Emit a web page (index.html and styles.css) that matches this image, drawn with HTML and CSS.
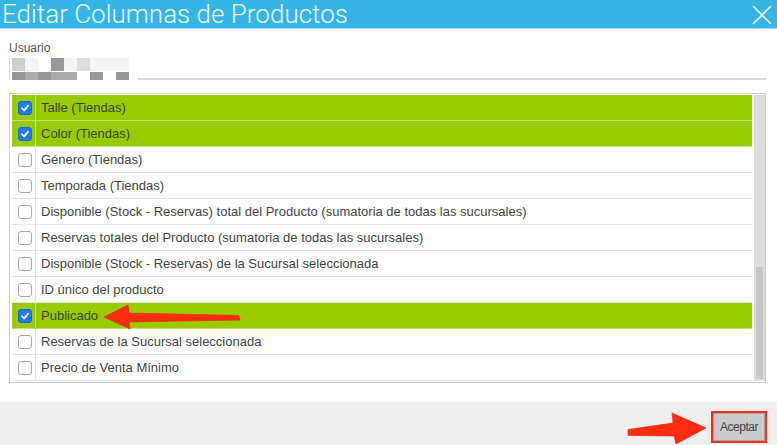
FILE: index.html
```html
<!DOCTYPE html>
<html lang="es">
<head>
<meta charset="utf-8">
<title>Editar Columnas de Productos</title>
<link rel="stylesheet" href="styles.css">
</head>
<body>
<div class="dialog">
  <header class="titlebar">
    <h1 class="title">Editar Columnas de Productos</h1>
    <button class="close" aria-label="Cerrar">
      <svg width="22" height="20" viewBox="0 0 22 20"><path d="M2 1 L20 19 M20 1 L2 19" stroke="#e6f5fc" stroke-width="1.6" fill="none"/></svg>
    </button>
  </header>

  <main class="content">
    <label class="field-label">Usuario</label>
    <div class="user-field">
      <div class="mosaic">
        <span class="c-c"></span><span class="c-f"></span><span class="c-w"></span><span class="c-a"></span><span class="c-f"></span><span class="c-d"></span><span class="c-f"></span><span class="c-f"></span><span class="c-f"></span>
        <span class="c-a"></span><span class="c-b"></span><span class="c-a"></span><span class="c-b"></span><span class="c-b"></span><span class="c-w"></span><span class="c-a"></span><span class="c-w"></span><span class="c-a"></span>
      </div>
      <div class="underline"></div>
    </div>

    <div class="list">
      <ul class="rows">
        <li class="row on"><span class="cb-cell"><span class="cb checked"><svg viewBox="0 0 14 14"><path d="M3.5 7.3 L6 9.8 L10.6 4.2"/></svg></span></span><span class="lbl">Talle (Tiendas)</span></li>
        <li class="row on"><span class="cb-cell"><span class="cb checked"><svg viewBox="0 0 14 14"><path d="M3.5 7.3 L6 9.8 L10.6 4.2"/></svg></span></span><span class="lbl">Color (Tiendas)</span></li>
        <li class="row"><span class="cb-cell"><span class="cb"></span></span><span class="lbl">Género (Tiendas)</span></li>
        <li class="row"><span class="cb-cell"><span class="cb"></span></span><span class="lbl">Temporada (Tiendas)</span></li>
        <li class="row"><span class="cb-cell"><span class="cb"></span></span><span class="lbl">Disponible (Stock - Reservas) total del Producto (sumatoria de todas las sucursales)</span></li>
        <li class="row"><span class="cb-cell"><span class="cb"></span></span><span class="lbl">Reservas totales del Producto (sumatoria de todas las sucursales)</span></li>
        <li class="row"><span class="cb-cell"><span class="cb"></span></span><span class="lbl">Disponible (Stock - Reservas) de la Sucursal seleccionada</span></li>
        <li class="row"><span class="cb-cell"><span class="cb"></span></span><span class="lbl">ID único del producto</span></li>
        <li class="row on"><span class="cb-cell"><span class="cb checked"><svg viewBox="0 0 14 14"><path d="M3.5 7.3 L6 9.8 L10.6 4.2"/></svg></span></span><span class="lbl">Publicado</span></li>
        <li class="row"><span class="cb-cell"><span class="cb"></span></span><span class="lbl">Reservas de la Sucursal seleccionada</span></li>
        <li class="row"><span class="cb-cell"><span class="cb"></span></span><span class="lbl">Precio de Venta Mínimo</span></li>
      </ul>
      <div class="scrollbar"><div class="thumb"></div></div>
    </div>
  </main>

  <footer class="footer">
    <button class="accept">Aceptar</button>
  </footer>
</div>

<svg class="arrow arrow-left" width="150" height="34" viewBox="100 300 150 34">
  <polygon points="104,317 128,305 129,313 239,315.5 240,320 129,322 130,329" fill="#ff2c12" stroke="#e8230c" stroke-width="0.6"/>
</svg>
<svg class="arrow arrow-right" width="90" height="36" viewBox="622 410 90 36">
  <polygon points="628,429.5 673,423 672,413 706,428 676,444 674,436 628,435.5" fill="#ff2c12" stroke="#e8230c" stroke-width="0.6"/>
</svg>
</body>
</html>
```

FILE: styles.css
```css
* { box-sizing: border-box; }

html, body {
  margin: 0;
  padding: 0;
  background: #fff;
  font-family: "Liberation Sans", Arial, sans-serif;
}

.dialog {
  width: 777px;
  height: 445px;
  display: flex;
  flex-direction: column;
  overflow: hidden;
}

.titlebar {
  height: 29px;
  background: #35b5e5;
  border-bottom: 1px solid #a3dbf1;
  display: flex;
  align-items: center;
  justify-content: space-between;
  padding: 0 4px 0 2px;
}

.title {
  margin: 0;
  font-family: Roboto, "Liberation Sans", sans-serif;
  font-weight: 300;
  font-size: 26px;
  line-height: 28px;
  color: #eaf7fd;
  letter-spacing: 0;
}

.close {
  border: 0;
  background: transparent;
  padding: 0;
  margin-top: 1px;
  width: 22px;
  height: 20px;
  display: flex;
}

.content {
  padding: 11px 11px 0 9px;
  display: flex;
  flex-direction: column;
}

.field-label {
  font-size: 12px;
  line-height: 15px;
  color: #555;
  margin-top: 1px;
}

.user-field {
  margin-top: 2px;
  height: 22px;
  display: flex;
  border-left: 1px solid #dcdcdc;
}

.mosaic {
  width: 128px;
  height: 22px;
  padding-left: 2px;
  display: grid;
  grid-template-columns: repeat(9, 13px);
  grid-template-rows: 13px 8px;
  row-gap: 1px;
  background: #fff;
}

.c-a { background: #979797; }
.c-b { background: #ababab; }
.c-c { background: #cfcfcf; }
.c-d { background: #dddddd; }
.c-f { background: #f4f4f4; }
.c-w { background: #ffffff; }

.underline {
  flex: 1;
  border-bottom: 2px solid #d6d6d6;
}

.list {
  margin-top: 13px;
  height: 290px;
  border: 1px solid #cdcdcd;
  padding: 1px 0 1px 2px;
  display: flex;
}

.rows {
  list-style: none;
  margin: 0;
  padding: 0;
  width: 740px;
}

.row {
  height: 26px;
  border-bottom: 1px solid #e4e4e4;
  display: flex;
  align-items: center;
  font-size: 13px;
  color: #444;
}

.row.on {
  background: #99cc00;
  border-bottom-color: #c5e07a;
  color: #3b4420;
}

.cb-cell {
  width: 24px;
  height: 100%;
  border-right: 1px solid #e2e2e2;
  display: flex;
  align-items: center;
  padding-left: 6px;
}

.row.on .cb-cell { border-right-color: #c9e382; }

.cb {
  width: 14px;
  height: 14px;
  border: 1px solid #a9a9a9;
  border-radius: 3px;
  background: #fff;
  display: block;
}

.cb.checked {
  background: #1f7cf0;
  border-color: #1a69d6;
}

.cb svg {
  width: 12px;
  height: 12px;
  display: block;
}

.cb svg path {
  fill: none;
  stroke: #fff;
  stroke-width: 2;
  stroke-linecap: round;
  stroke-linejoin: round;
}

.lbl {
  padding-left: 5px;
  white-space: nowrap;
}

.scrollbar {
  margin-left: 2px;
  width: 11px;
  background: #dddddd;
  display: flex;
  flex-direction: column;
  justify-content: flex-end;
  align-items: center;
  padding-bottom: 2px;
}

.thumb {
  width: 7px;
  height: 112px;
  background: #c7c7c7;
}

.footer {
  margin-top: 19px;
  height: 43px;
  background: #eeeeee;
  display: flex;
  justify-content: flex-end;
  align-items: flex-start;
  padding: 9px 10px 0 0;
}

.accept {
  width: 56px;
  height: 32px;
  border: 2px solid #ff2a18;
  background: #cbcbcb;
  box-shadow: inset 0 0 0 1px #a8a8a8;
  font-family: "Liberation Sans", Arial, sans-serif;
  font-size: 12px;
  letter-spacing: -0.5px;
  color: #444;
  padding: 0;
}

.arrow {
  position: absolute;
  overflow: visible;
}

.arrow-left { left: 100px; top: 300px; }
.arrow-right { left: 622px; top: 410px; }
```
